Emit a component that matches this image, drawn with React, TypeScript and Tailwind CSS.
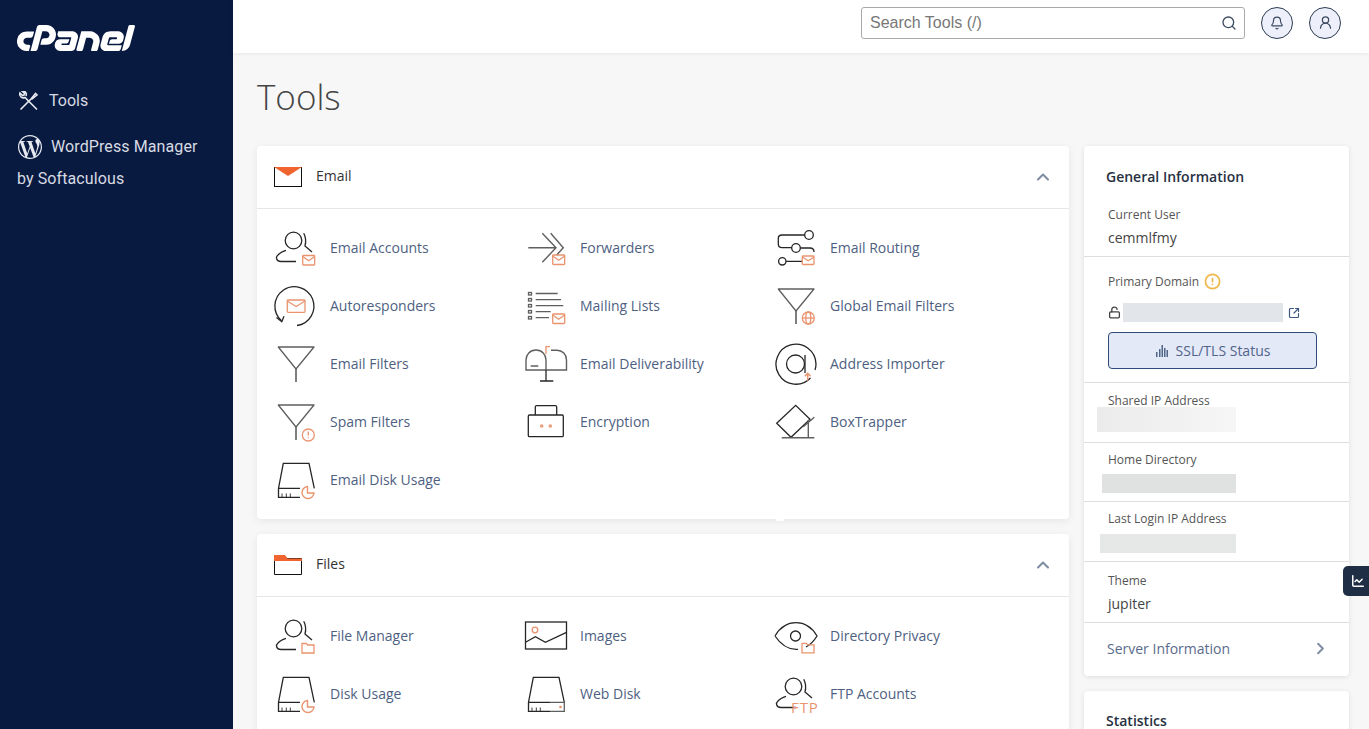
import type { ReactNode } from "react";
import { Bell, ChartLine, ChevronRight, ChevronUp, CircleAlert, LockOpen, Search, SquareArrowOutUpRight, UserRound } from "lucide-react";
import { SiCpanel, SiWordpress } from "react-icons/si";

const ORANGE = "#e9946f";
const DARK = "#262626";
const GREY = "#5f5f5f";

function Glyph({ children }: { children: ReactNode }) {
  return (
    <svg width="46" height="44" viewBox="0 0 46 44" fill="none" stroke={DARK} strokeWidth="1.3" className="shrink-0">
      {children}
    </svg>
  );
}

function Env({ x = 30.7, y = 29.5, w = 12, h = 9.5 }: { x?: number; y?: number; w?: number; h?: number }) {
  return (
    <g stroke={ORANGE} strokeWidth="1.3">
      <rect x={x} y={y} width={w} height={h} rx="0.8" />
      <path d={`M${x} ${y + 1}l${w / 2} ${h * 0.45}l${w / 2} ${-h * 0.45}`} />
    </g>
  );
}

function Folder({ x = 30, y = 29.5 }: { x?: number; y?: number }) {
  return <path stroke={ORANGE} d={`M${x} ${y}h4.5l1 1.5h6.5v8h-12z`} />;
}

function Person() {
  return (
    <>
      <circle cx="21.5" cy="14.5" r="8.3" />
      <path d="M31.7 7.3c2.2 4 2.3 9 1.300 12.700l7 6" />
      <path d="M24 35.500H9C4 35.500 3.500 31 6 29c2-2.500 5-3.700 8-4.700" />
    </>
  );
}

function Funnel() {
  return (
    <g stroke={GREY}>
      <path d="M6.3 5H42L24 27z" strokeLinejoin="round" />
      <path d="M24 27V40" strokeWidth="1.6" />
    </g>
  );
}

function Pie() {
  return <path stroke={ORANGE} strokeWidth="1.4" d="M35.5 28.500a6 6 0 1 0 6.500 6.500h-6.500z" />;
}

function Disk({ children }: { children?: ReactNode }) {
  return (
    <>
      <path d="M6.500 30.300 11.300 5.300H37L42.300 30.300M6.500 30.300V39.300H28M6.500 30.300H28" />
      <path strokeWidth="0.9" d="M10 35.500v3.500M14.300 35.500v3.500M18.300 35.500v3.500" />
      {children}
    </>
  );
}

const icons: Record<string, ReactNode> = {
  accounts: (
    <>
      <Person />
      <Env />
    </>
  ),
  auto: (
    <>
      <path d="M25 41.500A19.500 19.500 0 1 0 9.500 36.800" />
      <path d="M4.500 33.500 9.800 37.800l2.200-5.500" />
      <Env x={15.3} y={16} w={17.7} h={12.3} />
    </>
  ),
  forward: (
    <>
      <g stroke={GREY} strokeWidth="1.4">
        <path d="M6.3 21.700H33M20.300 7.300 34 21.700 20.300 36.300" />
        <path d="M28.700 7.300 41.300 21.700 34.700 29" />
      </g>
      <Env y={29} />
    </>
  ),
  lists: (
    <>
      <g stroke={GREY} strokeWidth="1.3">
        <rect x="6.5" y="8.5" width="3" height="2.5" />
        <rect x="6.5" y="14.500" width="3" height="2.5" />
        <rect x="6.5" y="20.500" width="3" height="2.5" />
        <rect x="6.5" y="26.500" width="3" height="2.5" />
        <rect x="6.5" y="32.500" width="3" height="2.5" />
        <path d="M13.700 9.500H35.700M13.700 15.700H39M13.700 21.700H41.300M13.700 27.700H28.700M13.700 33.700H27" />
      </g>
      <Env y={30} />
    </>
  ),
  deliver: (
    <>
      <path stroke={GREY} strokeWidth="1.4" d="M24 28H4V18c0-5.500 4-10 10-10s10 4.500 10 10v10h20.500V18c0-5.500-4-9.700-9.500-9.700h-6M8.700 24h7.600" />
      <path d="M24 28V39M18 39H31.300" />
      <path stroke={ORANGE} d="M24 12V4.700h4" />
    </>
  ),
  encrypt: (
    <>
      <path d="M13.300 15V7c0-.8.500-1.300 1.300-1.300h18.800c.8 0 1.300.500 1.300 1.300v8" />
      <rect x="6.3" y="15" width="35" height="21.700" rx="1.2" />
      <circle cx="19.7" cy="26" r="1.1" stroke={ORANGE} />
      <circle cx="28.3" cy="26" r="1.1" stroke={ORANGE} />
    </>
  ),
  routing: (
    <>
      <circle cx="37" cy="9" r="4.3" />
      <circle cx="24" cy="22" r="4.3" />
      <circle cx="10.3" cy="35.3" r="3.7" />
      <path d="M32.700 9H10c-2.500 0-3.700 1.500-3.700 3.500v5.500c0 2.500 1.300 3.700 3.700 3.700h9.700M28.300 22H38c2.500 0 4 1.500 4 4M14 35.300H30" />
      <Env x={30.3} y={30} w={11.7} h={8.5} />
    </>
  ),
  globalFilter: (
    <>
      <Funnel />
      <g stroke={ORANGE} strokeWidth="1.3">
        <circle cx="36.3" cy="34" r="6" fill="#fff" />
        <ellipse cx="36.3" cy="34" rx="2.5" ry="6" />
        <path d="M30.300 34H42.300" />
      </g>
    </>
  ),
  importer: (
    <>
      <path d="M38.500 36A20 20 0 1 1 44 22c0 2-.3 4-1 6" />
      <circle cx="23.5" cy="22" r="9" />
      <path d="M33 13V31" />
      <path stroke={ORANGE} strokeWidth="1.4" d="M35.700 38.700V31.300M32.800 34.200 35.700 31.300 38.600 34.200" />
    </>
  ),
  trapper: (
    <>
      <path d="M4.700 23.300 23.700 5.300 38 19.300 19 37.300z" />
      <path stroke={GREY} strokeWidth="1.4" d="M36.300 20V37.700M31.300 26.700 42.300 17.300M9.700 37.700H42.300" />
    </>
  ),
  filters: <Funnel />,
  spam: (
    <>
      <Funnel />
      <g stroke={ORANGE} strokeWidth="1.3">
        <circle cx="36.3" cy="35" r="6" fill="#fff" />
        <path d="M36.300 31.500V35.500M36.300 37.200V38.200" />
      </g>
    </>
  ),
  diskUsage: (
    <Disk>
      <Pie />
    </Disk>
  ),
  fileManager: (
    <>
      <Person />
      <Folder />
    </>
  ),
  images: (
    <>
      <rect x="3.5" y="8" width="41" height="27" />
      <path d="M3.500 28.300 13.400 22.700 23.400 28.300 44.500 18.300" />
      <circle cx="13" cy="16" r="2.8" stroke={ORANGE} />
    </>
  ),
  privacy: (
    <>
      <path d="M3 22C8 13.500 15 8.700 24 8.700 33 8.700 40 13.500 45 22 42 27 38.500 30.500 34 33M26 35.300C17 36 9 31 3 22" />
      <circle cx="23.5" cy="22" r="5" />
      <Folder y={29.3} />
    </>
  ),
  webDisk: (
    <Disk>
      <path stroke={GREY} d="M28 30.300H42.300V39.300H28" />
      <circle cx="38.5" cy="35" r="0.7" stroke={ORANGE} fill={ORANGE} />
    </Disk>
  ),
  ftp: (
    <>
      <Person />
      <text x="19" y="41" fontSize="15" fill={ORANGE} stroke="none" fontFamily="'Open Sans', sans-serif" letterSpacing="0.9">
        FTP
      </text>
    </>
  ),
};

function Tool({ icon, label }: { icon: string; label: string }) {
  return (
    <div className="flex h-[58px] items-center gap-3">
      <Glyph>{icons[icon]}</Glyph>
      <span className="text-sm text-[#4e5f82]">{label}</span>
    </div>
  );
}

function Section({ title, icon, tools }: { title: string; icon: ReactNode; tools: [string, string][] }) {
  return (
    <section className="mb-[15px] rounded-sm bg-white shadow-[0_2px_8px_rgba(0,0,0,0.07)]">
      <div className="flex h-[63px] items-center border-b border-[#e6e6e6] pl-[17px] pr-4">
        {icon}
        <span className="mb-[2px] ml-3.5 text-sm text-[#333]">{title}</span>
        <ChevronUp size={20} strokeWidth={2.5} className="ml-auto text-[#7f8da3]" />
      </div>
      <div className="grid grid-cols-[250px_250px_250px] px-[15px] py-2.5">
        {tools.map(([icon, label]) => (
          <Tool key={label} icon={icon} label={label} />
        ))}
      </div>
    </section>
  );
}

function Hidden({ label, block, className = "" }: { label: string; block: string; className?: string }) {
  return (
    <div className={`border-b border-[#dedede] pl-6 ${className}`}>
      <div className="text-xs leading-4 text-[#555]">{label}</div>
      <div className={block} />
    </div>
  );
}

export default function App() {
  return (
    <div className="relative flex h-screen overflow-hidden bg-[#f7f7f7] font-['Open_Sans',sans-serif]">
      <aside className="w-[233px] shrink-0 bg-[#091a40] font-['Roboto',sans-serif] text-base text-[#d7dbe3]">
        <div className="pl-[17px]">
          <SiCpanel size={118} className="-mt-[21px] text-white" />
        </div>
        <div className="-mt-[8px] flex items-center pl-[18px]">
          <svg width="21" height="21" viewBox="0 0 21 21" fill="none" stroke="#e6e9ef" strokeWidth="1.6">
            <path d="M2.500 18.500 13 8l4.500-5.500 1.500 1.500L13.500 8.500" />
            <path d="M19 18.500 7 6.500c-1.800.8-4 .2-5-2-.3-.9-.3-1.700 0-2.500l2.500 2.500 1.500-.5.5-1.500L4 0c1-.2 2 0 3 .7C8.300 1.700 8.500 3.500 8 5" />
          </svg>
          <span className="ml-2.5 leading-6">Tools</span>
        </div>
        <div className="mt-[18px] pl-[17px] leading-8">
          <div className="flex items-center">
            <SiWordpress size={24} className="ml-px text-[#e6e9ef]" />
            <span className="ml-[9px] tracking-[0.1px]">WordPress Manager</span>
          </div>
          <div className="tracking-[0.1px]">by Softaculous</div>
        </div>
      </aside>

      <div className="flex min-w-0 flex-1 flex-col">
        <header className="flex h-[53px] shrink-0 items-center justify-end bg-white pb-2 pr-7 shadow-[0_1px_4px_rgba(0,0,0,0.07)]">
          <div className="flex h-8 w-[384px] items-center justify-between rounded-[3px] border border-[#aaa] pl-2 pr-[7px] font-['Liberation_Sans',sans-serif] text-base text-[#777]">
            <span>Search Tools (/)</span>
            <Search size={16} className="text-[#3c4a60]" />
          </div>
          <div className="ml-4 flex h-8 w-8 items-center justify-center rounded-full border border-[#2b3a52] bg-[#edf0fa]">
            <Bell size={14} className="text-[#3c4a60]" />
          </div>
          <div className="ml-4 flex h-8 w-8 items-center justify-center rounded-full border border-[#2b3a52] bg-[#edf0fa]">
            <UserRound size={15} className="text-[#3c4a60]" />
          </div>
        </header>

        <div className="min-h-0 flex-1 pl-6">
          <h1 className="flex h-[93px] items-center pb-[5px] text-[35px] font-light text-[#444]">Tools</h1>
          <div className="flex gap-[15px]">
            <main className="w-[812px] shrink-0">
              <Section
                title="Email"
                icon={
                  <svg width="28" height="20" viewBox="0 0 28 20" className="shrink-0">
                    <rect x="0.5" y="0.5" width="27" height="19" fill="#fff" stroke="#111" />
                    <path d="M0 0H28L14 9z" fill="#f0642f" />
                  </svg>
                }
                tools={[
                  ["accounts", "Email Accounts"],
                  ["forward", "Forwarders"],
                  ["routing", "Email Routing"],
                  ["auto", "Autoresponders"],
                  ["lists", "Mailing Lists"],
                  ["globalFilter", "Global Email Filters"],
                  ["filters", "Email Filters"],
                  ["deliver", "Email Deliverability"],
                  ["importer", "Address Importer"],
                  ["spam", "Spam Filters"],
                  ["encrypt", "Encryption"],
                  ["trapper", "BoxTrapper"],
                  ["diskUsage", "Email Disk Usage"],
                ]}
              />
              <Section
                title="Files"
                icon={
                  <svg width="28" height="20" viewBox="0 0 28 20" className="shrink-0">
                    <path d="M.5 4.500V.5h10l2 3h15v16H.5z" fill="#fff" stroke="#111" />
                    <path d="M0 0h11l2.500 3.500H28V6H0z" fill="#f0642f" />
                  </svg>
                }
                tools={[
                  ["fileManager", "File Manager"],
                  ["images", "Images"],
                  ["privacy", "Directory Privacy"],
                  ["diskUsage", "Disk Usage"],
                  ["webDisk", "Web Disk"],
                  ["ftp", "FTP Accounts"],
                ]}
              />
            </main>

            <aside className="w-[265px] shrink-0">
              <div className="rounded-sm bg-white shadow-[0_1px_5px_rgba(0,0,0,0.1)]">
                <div className="h-[111px] border-b border-[#dedede] pt-[21px]">
                  <h2 className="pl-[22px] text-sm font-semibold leading-5 text-[#27303f]">General Information</h2>
                  <div className="mt-[20px] pl-6 text-xs leading-4 text-[#555]">Current User</div>
                  <div className="mt-[5px] pl-6 text-sm leading-5 text-[#444]">cemmlfmy</div>
                </div>
                <div className="h-[126px] border-b border-[#dedede] pl-6 pt-[16px]">
                  <div className="flex items-center text-xs leading-4 text-[#555]">
                    Primary Domain
                    <CircleAlert size={17} strokeWidth={2.5} className="ml-[5px] text-[#eeb94f]" />
                  </div>
                  <div className="mt-[13px] flex h-[19px] items-center">
                    <LockOpen size={13} strokeWidth={2.4} className="text-[#444]" />
                    <div className="ml-[2px] h-[19px] w-[160px] bg-[#e2e5ea]" />
                    <SquareArrowOutUpRight size={12} strokeWidth={2.4} className="ml-[5px] text-[#3f5a80]" />
                  </div>
                  <button className="mt-[10px] flex h-[37px] w-[209px] items-center justify-center gap-2 rounded-[4px] border border-[#2d4a78] bg-[#e3e9f7] text-sm text-[#51648a]">
                    <svg width="13" height="12" viewBox="0 0 13 12" fill="#51648a">
                      <rect x="1" y="7" width="1.5" height="5" />
                      <rect x="4" y="4" width="1.5" height="8" />
                      <rect x="6.5" y="0" width="1.5" height="12" />
                      <rect x="9" y="3" width="1.5" height="9" />
                      <rect x="11.5" y="5" width="1.5" height="7" />
                    </svg>
                    SSL/TLS Status
                  </button>
                </div>
                <Hidden label="Shared IP Address" block="-ml-[11px] -mt-[2px] h-[25px] w-[139px] bg-gradient-to-r from-[#ebebeb] to-[#f6f6f6]" className="h-[60px] pt-[10px]" />
                <Hidden label="Home Directory" block="-ml-[6px] mt-[6px] h-[19px] w-[134px] bg-[#e0e2e2]" className="h-[59px] pt-[9px]" />
                <Hidden label="Last Login IP Address" block="-ml-[8px] mt-[7px] h-[19px] w-[136px] bg-[#e6e7e7]" className="h-[60px] pt-[9px]" />
                <div className="h-[61px] border-b border-[#dedede] pl-6 pt-[11px]">
                  <div className="text-xs leading-4 text-[#555]">Theme</div>
                  <div className="mt-[5px] text-sm leading-5 text-[#444]">jupiter</div>
                </div>
                <div className="flex h-[53px] items-center justify-between pb-[2px] pl-[23px] pr-[19px] text-sm text-[#5a6b8c]">
                  Server Information
                  <ChevronRight size={19} strokeWidth={2.5} className="text-[#7f8da3]" />
                </div>
              </div>
              <div className="mt-[15px] h-[80px] rounded-sm bg-white pl-[22px] pt-[20px] text-sm font-semibold leading-5 text-[#27303f] shadow-[0_1px_5px_rgba(0,0,0,0.1)]">
                Statistics
              </div>
            </aside>
          </div>
        </div>
      </div>

      <div className="absolute left-[776px] top-[518px] h-[3px] w-2 bg-white" />
      <div className="absolute right-0 top-[566px] flex h-[30px] w-[26px] items-center justify-center rounded-l-[5px] bg-[#1f2e45] pl-[3px]">
        <ChartLine size={14} strokeWidth={2.6} className="text-white" />
      </div>
    </div>
  );
}
